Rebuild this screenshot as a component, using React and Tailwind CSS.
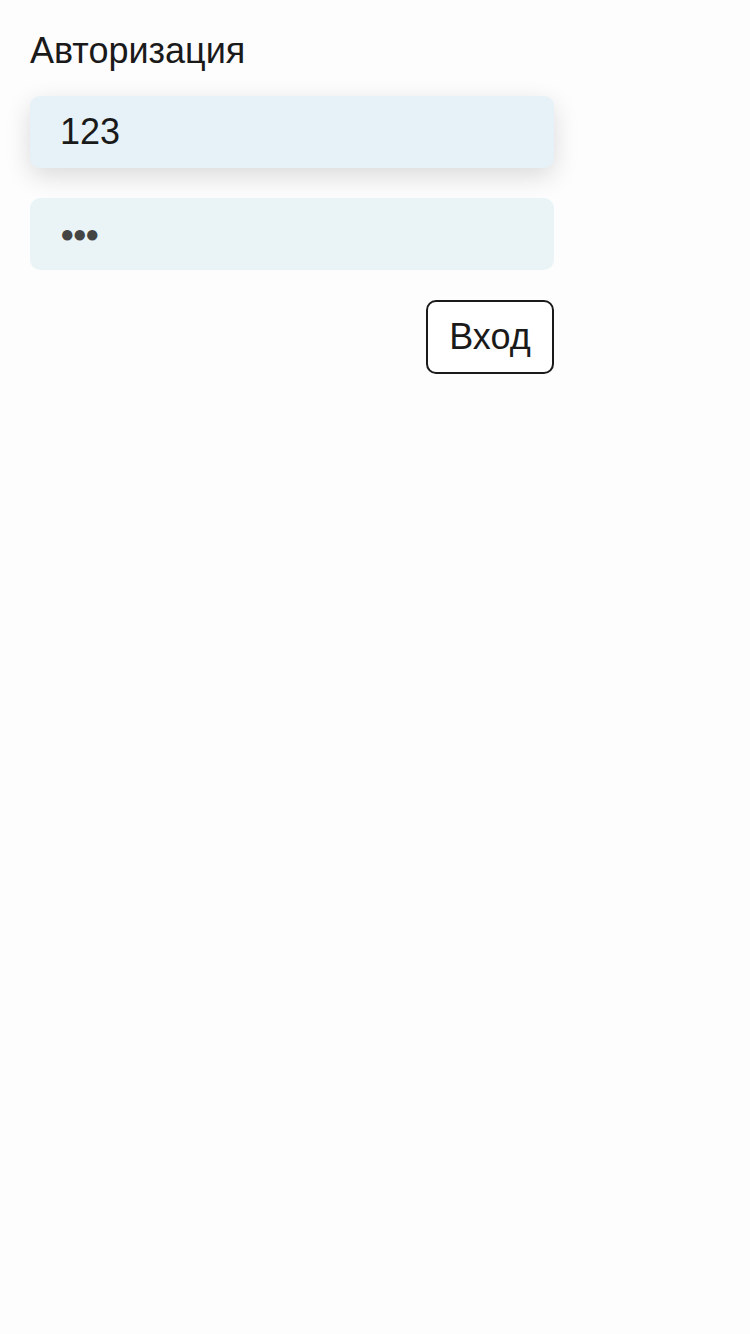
export default function App() {
  return (
    <div className="min-h-[1334px] w-[750px] bg-[#fdfdfd] px-[30px] pt-[24px]" style={{ fontFamily: '"Liberation Sans", Arial, sans-serif' }}>
      <div className="w-[524px]">
        <h1 className="text-[36px] leading-[54px] text-[#1a1a1a] font-normal">Авторизация</h1>
        <div className="mt-[18px] flex h-[72px] items-center rounded-[10px] bg-[#e6f2f7] px-[30px] text-[36px] text-[#1a1a1a] shadow-[0_8px_26px_rgba(0,0,0,0.14)]">
          123
        </div>
        <div className="mt-[30px] flex h-[72px] items-center rounded-[10px] bg-[#eaf4f6] px-[30px] text-[#444] text-[24px] tracking-[-2px]">
          ●●●
        </div>
        <div className="mt-[30px] flex justify-end">
          <button className="flex h-[74px] w-[128px] items-center justify-center rounded-[10px] border-2 border-[#1a1a1a] bg-white text-[36px] text-[#1a1a1a]">
            Вход
          </button>
        </div>
      </div>
    </div>
  );
}
